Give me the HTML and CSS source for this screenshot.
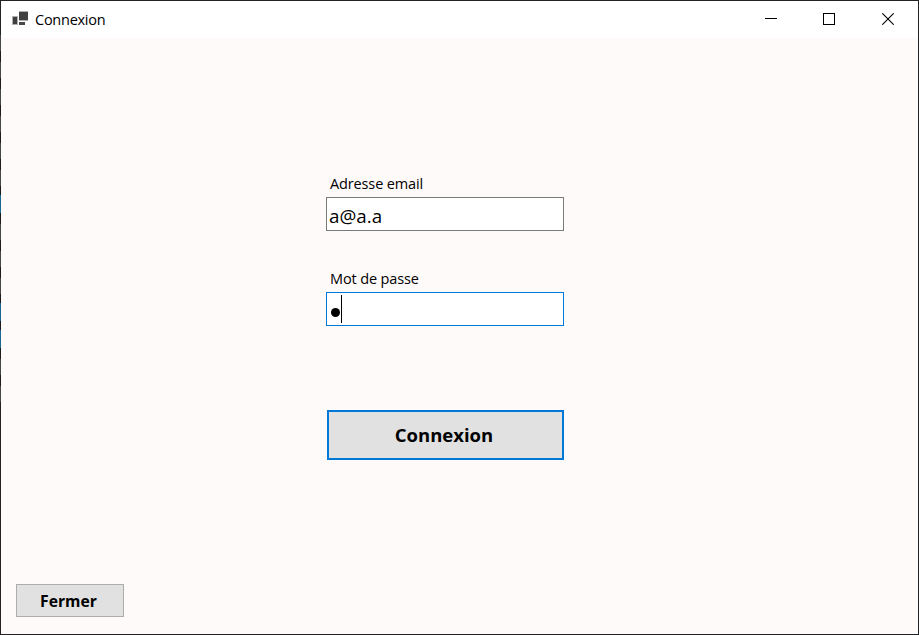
FILE: index.html
```html
<!DOCTYPE html>
<html lang="fr">
<head>
<meta charset="utf-8">
<title>Connexion</title>
<link rel="stylesheet" href="styles.css">
</head>
<body>
<div class="window">
  <header class="titlebar">
    <svg class="app-icon" width="17" height="16" viewBox="0 0 17 16" shape-rendering="crispEdges">
      <rect x="0" y="5" width="6" height="9" fill="#b0b0b0"/>
      <rect x="1" y="6" width="4" height="7" fill="#404040"/>
      <rect x="7" y="0" width="9" height="10" fill="#b0b0b0"/>
      <rect x="7" y="1" width="9" height="8" fill="#414141"/>
      <rect x="7" y="11" width="6" height="3" fill="#484848"/>
    </svg>
    <span class="title">Connexion</span>
    <nav class="controls">
      <span class="control"><svg width="12" height="12" viewBox="0 0 12 12"><path d="M0 5.5H12" stroke="#000"/></svg></span>
      <span class="control"><svg width="12" height="12" viewBox="0 0 12 12"><rect x=".5" y=".5" width="11" height="11" fill="none" stroke="#000"/></svg></span>
      <span class="control"><svg width="12" height="12" viewBox="0 0 12 12"><path d="M.3 .3L11.7 11.7M11.7 .3L.3 11.7" stroke="#000" stroke-width="1.1"/></svg></span>
    </nav>
  </header>
  <main class="content">
    <form class="form">
      <div class="field">
        <span class="label label-email">Adresse email</span>
        <div class="input"><span class="value">a@a.a</span></div>
      </div>
      <div class="field">
        <span class="label label-password">Mot de passe</span>
        <div class="input focused"><span class="dot"></span><span class="caret"></span></div>
      </div>
      <button type="button" class="button submit">Connexion</button>
    </form>
    <button type="button" class="button close">Fermer</button>
  </main>
</div>
</body>
</html>
```

FILE: styles.css
```css
* { box-sizing: border-box; }

body {
  margin: 0;
  font-family: "Open Sans", "Noto Sans", sans-serif;
  color: #000;
}

.window {
  width: 919px;
  height: 635px;
  padding: 1px;
  display: flex;
  flex-direction: column;
  background:
    linear-gradient(#1b6693, #1b6693) 0 195px / 1px 18px no-repeat,
    linear-gradient(#1b6693, #1b6693) 0 303px / 1px 18px no-repeat,
    linear-gradient(#1b6693, #1b6693) 0 330px / 1px 18px no-repeat,
    repeating-linear-gradient(#444648 0 16px, #1c1c1e 16px 27px) 0 35px / 1px 367px no-repeat,
    #222124;
}

.titlebar {
  height: 37px;
  display: flex;
  align-items: center;
  padding-left: 11px;
  background: #fff;
}

.app-icon { margin-top: -1px; }

.title {
  margin-left: 6px;
  font-size: 14.5px;
  line-height: 20px;
  letter-spacing: -0.25px;
}

.controls { display: flex; margin-left: auto; padding-right: 1px; }

.control {
  width: 58.5px;
  height: 37px;
  display: flex;
  align-items: center;
  justify-content: center;
  padding-bottom: 1px;
}

.content {
  flex: 1;
  display: flex;
  flex-direction: column;
  justify-content: space-between;
  padding: 135px 15px 17px;
  background: #fffafa;
}

.form {
  width: 238px;
  margin-left: 310px;
  display: flex;
  flex-direction: column;
}

.field { margin-bottom: 37px; height: 58px; }

.label {
  display: block;
  height: 24px;
  padding-left: 4px;
  font-size: 14.5px;
  line-height: 22px;
  letter-spacing: -0.13px;
}

.input {
  height: 34px;
  display: flex;
  align-items: center;
  padding-left: 2px;
  border: 1px solid #7a7a7a;
  background: #fff;
}

.input.focused { border-color: #0078d7; }

.value { font-size: 18.8px; line-height: 28px; margin-top: 4px; }

.dot {
  width: 9px;
  height: 9px;
  margin: 7px 0 0 2px;
  border-radius: 50%;
  background: #000;
}

.caret { width: 1px; height: 28px; margin-left: 1px; background: #000; }

.button {
  padding: 0;
  font-family: inherit;
  font-weight: 700;
  color: #000;
  background: #e1e1e1;
}

.submit {
  width: 237px;
  height: 50px;
  margin: 47px 0 0 1px;
  padding: 0 3px 2px 0;
  border: 2px solid #0078d7;
  font-size: 18.5px;
}

.close {
  width: 108px;
  height: 33px;
  padding-right: 3px;
  border: 1px solid #adadad;
  font-size: 15.7px;
}
```
